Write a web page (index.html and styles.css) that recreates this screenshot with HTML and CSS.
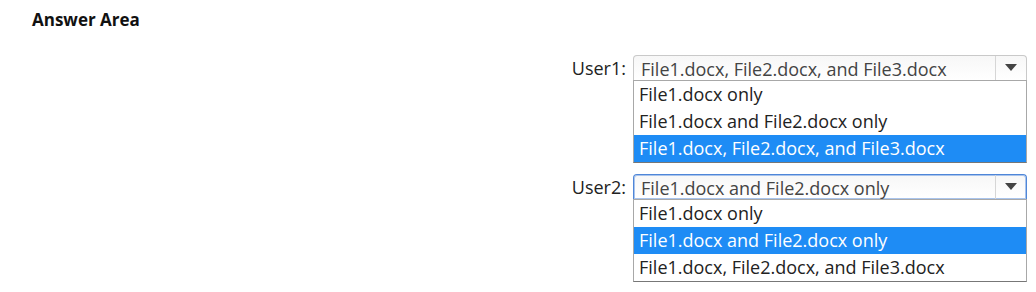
FILE: index.html
```html
<!DOCTYPE html>
<html lang="en">
<head>
  <meta charset="UTF-8">
  <meta name="viewport" content="width=device-width, initial-scale=1.0">
  <title>Answer Area</title>
  <link rel="stylesheet" href="styles.css">
</head>
<body>
  <h1 class="title">Answer Area</h1>

  <div class="answers">
    <div class="row">
      <span class="label">User1:</span>
      <div class="dropdown">
        <div class="select">
          <span class="value">File1.docx, File2.docx, and File3.docx</span>
          <span class="arrow"><svg width="12" height="7" viewBox="0 0 12 7"><path d="M0 0 H12 L6 7 Z" fill="#444"/></svg></span>
        </div>
        <ul class="options">
          <li>File1.docx only</li>
          <li>File1.docx and File2.docx only</li>
          <li class="selected">File1.docx, File2.docx, and File3.docx</li>
        </ul>
      </div>
    </div>

    <div class="row">
      <span class="label">User2:</span>
      <div class="dropdown">
        <div class="select focused">
          <span class="value">File1.docx and File2.docx only</span>
          <span class="arrow"><svg width="12" height="7" viewBox="0 0 12 7"><path d="M0 0 H12 L6 7 Z" fill="#444"/></svg></span>
        </div>
        <ul class="options">
          <li>File1.docx only</li>
          <li class="selected">File1.docx and File2.docx only</li>
          <li>File1.docx, File2.docx, and File3.docx</li>
        </ul>
      </div>
    </div>
  </div>
</body>
</html>
```

FILE: styles.css
```css
body {
  margin: 0;
  background: #fff;
  font-family: "Open Sans", "Noto Sans", sans-serif;
  color: #222;
}
.title {
  margin: 0;
  padding: 10px 0 0 32px;
  font-size: 17px;
  line-height: 20px;
  font-weight: bold;
  color: #111;
}
.answers {
  display: flex;
  flex-direction: column;
  align-items: flex-end;
  gap: 11px;
  padding: 25px 9px 0 0;
}
.row {
  display: flex;
  align-items: flex-start;
  gap: 7px;
}
.label {
  font-size: 18px;
  line-height: 26px;
  color: #222;
}
.dropdown {
  width: 394px;
}
.select {
  display: flex;
  height: 25px;
  box-sizing: border-box;
  border: 1px solid #c9c9c9;
  border-bottom: none;
  border-radius: 4px 4px 0 0;
  background: linear-gradient(#f7f7f7, #fff);
  overflow: hidden;
}
.select.focused {
  border: 1px solid #4f86d8;
  border-bottom: none;
  box-shadow: inset 0 0 0 1px #a9c4ec;
}
.value {
  flex: 1;
  padding: 1px 0 0 7px;
  font-size: 18px;
  line-height: 24px;
  color: #444;
  white-space: nowrap;
}
.arrow {
  width: 30px;
  border-left: 1px solid #d6d6d6;
  display: flex;
  justify-content: center;
  padding-top: 8px;
}
.options {
  list-style: none;
  margin: 0;
  padding: 0;
  border: 1px solid #a8a8a8;
  border-bottom-color: #777;
  background: #fff;
}
.options li {
  height: 27px;
  line-height: 27px;
  padding-left: 5px;
  font-size: 18px;
  color: #222;
  white-space: nowrap;
}
.options li.selected {
  background: #1e8cf5;
  color: #fff;
}
```
